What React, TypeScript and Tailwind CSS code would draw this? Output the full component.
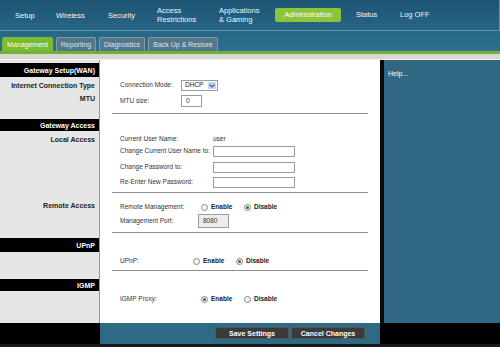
import React from "react";

const Radio = ({ checked }: { checked?: boolean }) => (
  <span className="inline-flex h-[7px] w-[7px] items-center justify-center rounded-full border border-[#8a8a8a] bg-[#f4f4f4]">
    {checked && <span className="h-[3px] w-[3px] rounded-full bg-[#3d6e2a]" />}
  </span>
);

const RadioPair = ({ enabled }: { enabled: boolean }) => (
  <div className="flex items-center">
    <Radio checked={enabled} />
    <span className="ml-[3px] w-[33px] font-bold text-[#222]">Enable</span>
    <Radio checked={!enabled} />
    <span className="ml-[3px] font-bold text-[#222]">Disable</span>
  </div>
);

const Input = ({ w, value, gray }: { w: number; value?: string; gray?: boolean }) => (
  <div
    className={`flex h-full items-center border border-[#9c9c9c] pl-[4px] text-[#333] ${gray ? "bg-[#ececec]" : "bg-white"}`}
    style={{ width: w }}
  >
    {value}
  </div>
);

const Sep = ({ mt }: { mt: string }) => (
  <div className={`${mt} mx-[12px] h-[2px] border-t border-[#8f8f8f] border-b-[#e0e0e0]`} />
);

const Bar = ({ label, cls }: { label: string; cls: string }) => (
  <div className={`${cls} flex items-center justify-end bg-black pr-[4px] font-bold text-white`}>{label}</div>
);

export default function App() {
  const navItems: { label: React.ReactNode; w: number }[] = [
    { label: "Setup", w: 41 },
    { label: "Wireless", w: 52 },
    { label: "Security", w: 49 },
    { label: <>Access<br />Restrictions</>, w: 62 },
    { label: <>Applications<br />&amp; Gaming</>, w: 56 },
  ];
  return (
    <div className="h-[347px] w-[500px] overflow-hidden bg-[#2d6a86] font-['Liberation_Sans',Arial,sans-serif] text-[6.5px] leading-none">
      {/* header */}
      <div className="bg-gradient-to-b from-[#1d5474] to-[#2e7190]">
        <div className="flex h-[31px] items-center border-b border-r border-[#5d93ad] pl-[15px] text-[7.5px] text-[#f2f6f8]">
          {navItems.map((n, i) => (
            <div key={i} className="shrink-0 leading-[9px]" style={{ width: n.w }}>
              {n.label}
            </div>
          ))}
          <div className="w-[81px] shrink-0">
            <div className="flex h-[14px] w-[66px] items-center justify-center rounded-[2px] bg-[#8cc43c] text-white">
              Administration
            </div>
          </div>
          <div className="w-[44px] shrink-0">Status</div>
          <div>Log OFF</div>
        </div>
        <div className="flex h-[20px] items-end gap-[3px] pl-[2px] text-[7px]">
          <div className="flex h-[14px] w-[51px] items-center justify-center rounded-t-[2px] bg-[#7cba2e] text-white">
            Management
          </div>
          <div className="flex h-[14px] w-[40px] items-center justify-center rounded-t-[2px] border border-b-0 border-[#7f9cab] bg-[#55778a] text-[#dce6ec]">
            Reporting
          </div>
          <div className="flex h-[14px] w-[46px] items-center justify-center rounded-t-[2px] border border-b-0 border-[#7f9cab] bg-[#55778a] text-[#dce6ec]">
            Diagnostics
          </div>
          <div className="flex h-[14px] w-[70px] items-center justify-center rounded-t-[2px] border border-b-0 border-[#7f9cab] bg-[#55778a] text-[#dce6ec]">
            Back Up &amp; Restore
          </div>
        </div>
      </div>
      <div className="h-[3px] bg-[#6db03c]" />
      <div className="h-[6px] border-b border-[#f4f2ee] bg-[#dcd8d0]" />

      {/* main */}
      <div className="flex h-[263px]">
        {/* left */}
        <div className="flex w-[100px] flex-col border-r border-[#9a9a9a] bg-[#e6e6e6] pt-[3px] font-bold text-[7px] text-[#222]">
          <Bar label="Gateway Setup(WAN)" cls="h-[14px]" />
          <div className="mt-[4px] flex h-[9px] items-center justify-end pr-[4px]">Internet Connection Type</div>
          <div className="mt-[4px] flex h-[9px] items-center justify-end pr-[4px]">MTU</div>
          <Bar label="Gateway Access" cls="mt-[16px] h-[12px]" />
          <div className="mt-[4px] flex h-[9px] items-center justify-end pr-[4px]">Local Access</div>
          <div className="mt-[57px] flex h-[9px] items-center justify-end pr-[4px]">Remote Access</div>
          <Bar label="UPnP" cls="mt-[28px] h-[14px]" />
          <Bar label="IGMP" cls="mt-[27px] h-[12px]" />
        </div>
        {/* center */}
        <div className="w-[280px] bg-white text-[#333]">
          <div className="mt-[20px] flex h-[11px] items-center pl-[20px]">
            <div className="w-[61px]">Connection Mode:</div>
            <div className="flex h-full w-[37px] items-center justify-between border border-[#9c9c9c] bg-white pl-[3px] pr-[1px] text-[#222]">
              DHCP
              <span className="flex h-[7px] w-[8px] items-center justify-center rounded-[1px] bg-[#c6d6f0]">
                <svg width="6" height="4" viewBox="0 0 6 4">
                  <path d="M0.5 0.5 L3 3 L5.5 0.5" stroke="#3d5f9c" strokeWidth="1.2" fill="none" />
                </svg>
              </span>
            </div>
          </div>
          <div className="mt-[4px] flex h-[12px] items-center pl-[20px]">
            <div className="w-[61px]">MTU size:</div>
            <Input w={21} value="0" />
          </div>
          <Sep mt="mt-[6px]" />
          <div className="mt-[20px] flex h-[9px] items-center pl-[20px]">
            <div className="w-[93px]">Current User Name:</div>
            <div>user</div>
          </div>
          <div className="mt-[2px] flex h-[11px] items-center pl-[20px]">
            <div className="w-[93px]">Change Current User Name to:</div>
            <Input w={82} />
          </div>
          <div className="mt-[5px] flex h-[11px] items-center pl-[20px]">
            <div className="w-[93px]">Change Password to:</div>
            <Input w={82} />
          </div>
          <div className="mt-[4px] flex h-[11px] items-center pl-[20px]">
            <div className="w-[93px]">Re-Enter New Password:</div>
            <Input w={82} />
          </div>
          <Sep mt="mt-[4px]" />
          <div className="mt-[8px] flex h-[10px] items-center pl-[20px]">
            <div className="w-[81px]">Remote Management:</div>
            <RadioPair enabled={false} />
          </div>
          <div className="mt-[2px] flex h-[14px] items-center pl-[20px]">
            <div className="w-[78px]">Management Port:</div>
            <Input w={31} value="8080" gray />
          </div>
          <Sep mt="mt-[4px]" />
          <div className="mt-[22px] flex h-[10px] items-center pl-[20px]">
            <div className="w-[73px]">UPnP:</div>
            <RadioPair enabled={false} />
          </div>
          <Sep mt="mt-[4px]" />
          <div className="mt-[22px] flex h-[10px] items-center pl-[20px]">
            <div className="w-[81px]">IGMP Proxy:</div>
            <RadioPair enabled={true} />
          </div>
        </div>
        {/* help */}
        <div className="flex-1 border-l-4 border-[#080808] bg-[#2f6681] pl-[4px] pt-[10px] text-[7px] text-white">
          Help...
        </div>
      </div>

      {/* footer */}
      <div className="flex h-[24px] border-b-[3px] border-[#1b1b1b]">
        <div className="w-[100px] bg-black" />
        <div className="flex w-[280px] items-start justify-end gap-[2px] bg-[#2d6a86] pr-[15px] pt-[4px] text-[7px] font-bold text-white">
          <div className="flex h-[12px] w-[74px] items-center justify-center border border-[#555] bg-[#3a3a3a]">Save Settings</div>
          <div className="flex h-[12px] w-[74px] items-center justify-center border border-[#555] bg-[#3a3a3a]">Cancel Changes</div>
        </div>
        <div className="flex-1 bg-black" />
      </div>
    </div>
  );
}
